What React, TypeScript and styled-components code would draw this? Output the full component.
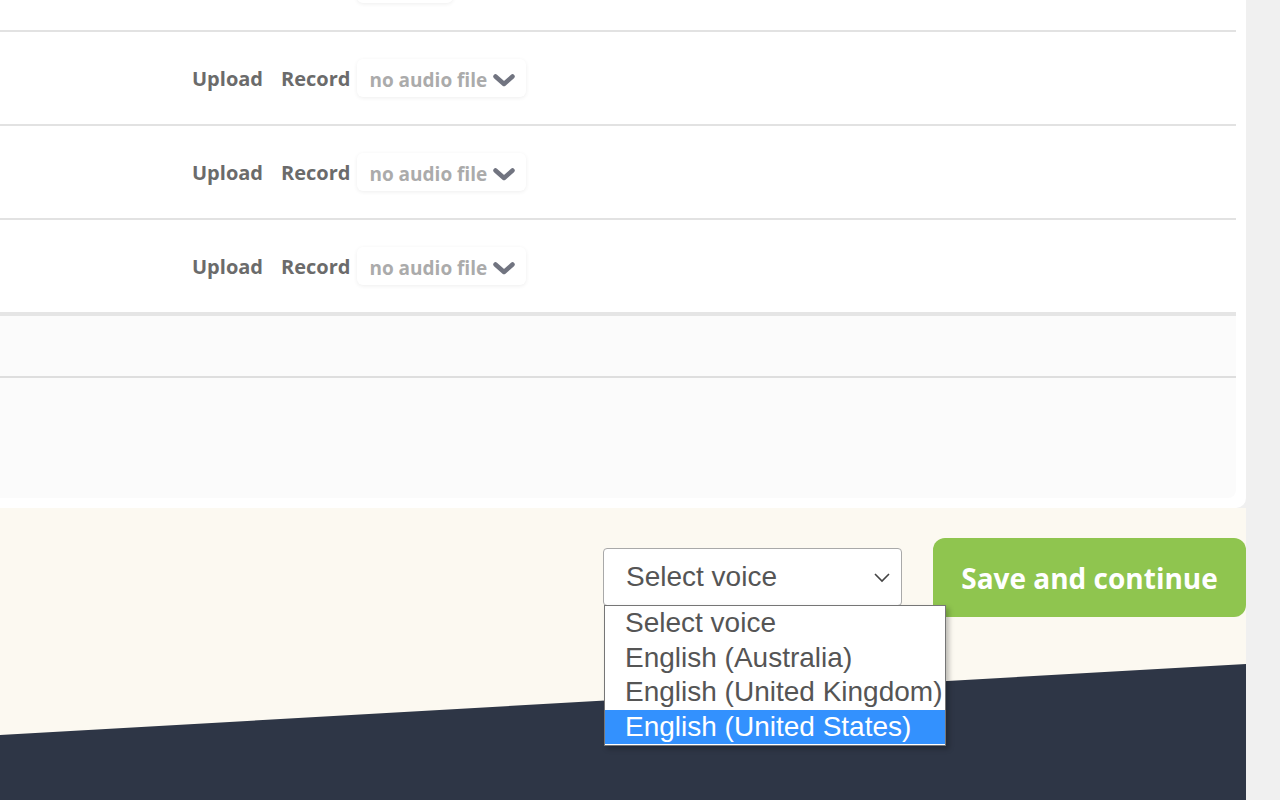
import styled, { createGlobalStyle } from "styled-components";

const GlobalStyle = createGlobalStyle`
  html, body {
    margin: 0;
    padding: 0;
    background: #f0f0f0;
    overflow: hidden;
  }
  body {
    font-family: "Open Sans", "Liberation Sans", sans-serif;
  }
`;

const Page = styled.div`
  width: 1246px;
  height: 800px;
  overflow: hidden;
  display: flex;
  flex-direction: column;
`;

const Card = styled.div`
  background: #ffffff;
  padding: 0 10px 10px 0;
  border-bottom-right-radius: 10px;
  overflow: hidden;
`;

const Rows = styled.div`
  margin-top: -62px;
`;

const Row = styled.div<{ $indent?: number }>`
  height: 92px;
  display: flex;
  align-items: center;
  padding-left: ${(p) => p.$indent ?? 192}px;
  border-bottom: 2px solid #e2e2e2;
  &:last-child {
    border-bottom: none;
  }
`;

const RowLink = styled.span`
  font-size: 20px;
  font-weight: 700;
  color: #6b6b6b;
  margin-right: 18px;
  white-space: nowrap;
`;

const AudioPicker = styled.div<{ $width?: number; $offset?: number }>`
  display: flex;
  align-items: center;
  justify-content: space-between;
  flex-shrink: 0;
  box-sizing: border-box;
  width: ${(p) => p.$width ?? 169}px;
  height: 38px;
  margin-left: ${(p) => p.$offset ?? -11}px;
  padding: 3px 11px 0 12px;
  border-radius: 6px;
  background: #ffffff;
  box-shadow: 0 1px 4px rgba(0, 0, 0, 0.07);
  font-size: 19px;
  font-weight: 700;
  color: #ababab;
  white-space: nowrap;
`;

const Extras = styled.div`
  background: #fbfbfb;
  border-top: 4px solid #e5e5e5;
  border-bottom-right-radius: 8px;
`;

const ExtraBand = styled.div<{ $h: number; $line?: boolean }>`
  height: ${(p) => p.$h}px;
  border-bottom: ${(p) => (p.$line ? "2px solid #dedede" : "none")};
`;

const Footer = styled.div`
  flex: 1;
  background: #fcf9f1;
  display: flex;
  flex-direction: column;
`;

const Actions = styled.div`
  display: flex;
  justify-content: flex-end;
  align-items: center;
  gap: 31px;
  padding: 30px 0 47px;
`;

const VoicePicker = styled.div`
  position: relative;
  z-index: 2;
`;

const SelectBox = styled.div`
  box-sizing: border-box;
  width: 299px;
  height: 58px;
  margin-top: -1px;
  border: 1px solid #a9a9a9;
  border-radius: 4px;
  background: #ffffff;
  display: flex;
  align-items: center;
  justify-content: space-between;
  padding: 0 10px 0 22px;
  font-family: "Liberation Sans", Arial, sans-serif;
  font-size: 28px;
  color: #555555;
`;

const OptionList = styled.div`
  position: absolute;
  top: calc(100% - 1px);
  left: 1px;
  box-sizing: border-box;
  width: 342px;
  background: #ffffff;
  border: 1px solid #767676;
  box-shadow: 3px 3px 5px rgba(0, 0, 0, 0.25);
  padding-bottom: 1px;
`;

const Option = styled.div<{ $selected?: boolean }>`
  height: 34.5px;
  line-height: 33px;
  padding-left: 20px;
  font-family: "Liberation Sans", Arial, sans-serif;
  font-size: 28px;
  white-space: nowrap;
  color: ${(p) => (p.$selected ? "#ffffff" : "#555555")};
  background: ${(p) => (p.$selected ? "#3391fe" : "transparent")};
`;

const SaveButton = styled.button`
  width: 313px;
  height: 79px;
  border: none;
  border-radius: 12px;
  background: #8fc54f;
  color: #ffffff;
  font-family: "Open Sans", sans-serif;
  font-size: 28px;
  font-weight: 700;
  padding: 0;
`;

const Wave = styled.div`
  flex: 1;
  background: #2e3646;
  clip-path: polygon(0 71px, 100% 0, 100% 100%, 0 100%);
`;

const ChevronSolid = () => (
  <svg width="22" height="14" viewBox="0 0 22 14">
    <path d="M2.5 3.5 L11 11 L19.5 3.5" fill="none" stroke="#717480" strokeWidth="4.5" strokeLinecap="round" strokeLinejoin="round" />
  </svg>
);

const ChevronThin = () => (
  <svg width="18" height="12" viewBox="0 0 18 12">
    <path d="M2 3 L9 10 L16 3" fill="none" stroke="#444" strokeWidth="1.6" />
  </svg>
);

const voices = ["Select voice", "English (Australia)", "English (United Kingdom)", "English (United States)"];

function AudioRow({ label }: { label: string }) {
  return (
    <Row>
      <RowLink>Upload</RowLink>
      <RowLink>Record</RowLink>
      <AudioPicker>
        {label}
        <ChevronSolid />
      </AudioPicker>
    </Row>
  );
}

export default function App() {
  return (
    <>
      <GlobalStyle />
      <Page>
        <Card>
          <Rows>
            {/* row scrolled mostly out of view: only the bottom of its picker shows */}
            <Row $indent={357}>
              <AudioPicker $width={96} $offset={0} />
            </Row>
            <AudioRow label="no audio file" />
            <AudioRow label="no audio file" />
            <AudioRow label="no audio file" />
          </Rows>
          <Extras>
            <ExtraBand $h={60} $line />
            <ExtraBand $h={120} />
          </Extras>
        </Card>
        <Footer>
          <Actions>
            <VoicePicker>
              <SelectBox>
                Select voice
                <ChevronThin />
              </SelectBox>
              <OptionList>
                {voices.map((v, i) => (
                  <Option key={v} $selected={i === 3}>
                    {v}
                  </Option>
                ))}
              </OptionList>
            </VoicePicker>
            <SaveButton>Save and continue</SaveButton>
          </Actions>
          <Wave />
        </Footer>
      </Page>
    </>
  );
}
